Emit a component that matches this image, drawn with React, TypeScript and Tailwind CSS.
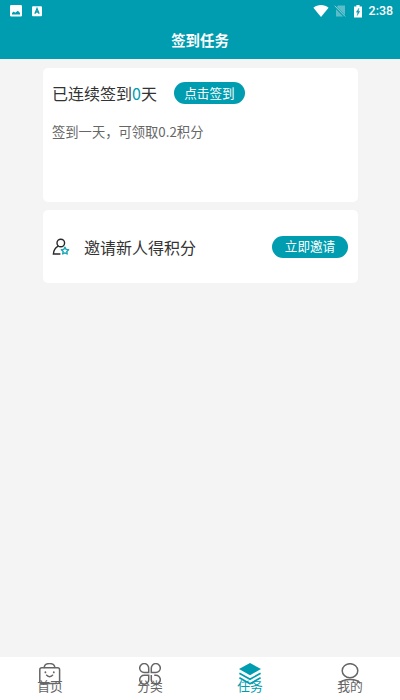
import type { ReactNode } from "react"

interface Tab {
    label: string
    icon: ReactNode
    active?: boolean
}

const tabs: Tab[] = [
    { label: "首页", icon: <BagIcon /> },
    { label: "分类", icon: <CategoryIcon /> },
    { label: "任务", icon: <LayersIcon />, active: true },
    { label: "我的", icon: <ProfileIcon /> },
]

function BagIcon() {
    return (
        <svg width="22" height="22" viewBox="0 0 22 22" fill="none" stroke="currentColor" strokeWidth="1.5" strokeLinecap="round">
            <rect x="0.8" y="4.8" width="19.8" height="15.6" rx="2" />
            <path d="M5.2 4.5C5.6 -0.7 15.4 -0.7 15.8 4.5" />
            <path d="M7.6 12.2c1.2 1.9 4.8 1.9 6 0" />
            <path d="M6.4 9.2v.2M14.8 9.2v.2" strokeWidth="1.8" />
        </svg>
    )
}

function CategoryIcon() {
    return (
        <svg width="22" height="22" viewBox="0 0 22 22" fill="none" stroke="currentColor" strokeWidth="1.5">
            <path d="M9.7 9.6H5.3A4.5 4.5 0 1 1 9.7 5.2z" />
            <path d="M12.3 9.6h4.4a4.5 4.5 0 1 0-4.4-4.4z" />
            <path d="M9.7 12.2H5.3a4.5 4.5 0 1 0 4.4 4.4z" />
            <path d="M12.3 12v4.6a4.5 4.5 0 1 0 4.4-4.4h-1.5" />
        </svg>
    )
}

function LayersIcon() {
    return (
        <svg width="22" height="22" viewBox="0 0 22 22" fill="none" stroke="currentColor" strokeWidth="1.7">
            <path d="M11 0 22 6 11 12.2 0 6z" fill="currentColor" stroke="none" />
            <path d="M.4 10.3 11 16.2l10.6-5.9M.4 14.8 11 20.7l10.6-5.9" />
        </svg>
    )
}

function ProfileIcon() {
    return (
        <svg width="22" height="22" viewBox="0 0 22 22" fill="none" stroke="currentColor" strokeWidth="1.5">
            <ellipse cx="11" cy="7.7" rx="7.8" ry="7" />
            <path d="M.8 20.5C2 17.8 6 16.4 11 16.4s9 1.4 10.2 4.1" />
        </svg>
    )
}

function InviteIcon() {
    return (
        <svg width="18" height="18" viewBox="0 0 18 18" fill="none" stroke="#292929" strokeWidth="1.4">
            <circle cx="8.8" cy="5" r="3.8" />
            <path d="M6.2 8.2C3.6 9.6 1.6 12.2 1.4 16h7" />
            <path
                d="m13 9.2 1.1 2.2 2.5.3-1.8 1.7.4 2.6-2.2-1.2-2.3 1.2.5-2.6-1.9-1.7 2.5-.3z"
                stroke="#1ba6b5"
                strokeLinejoin="round"
            />
        </svg>
    )
}

function StatusBar() {
    return (
        <div className="flex h-[22px] items-center pr-[7px] pl-[10px]">
            <svg width="12" height="12" viewBox="0 0 12 12">
                <rect width="12" height="11.5" rx="1.2" fill="#fff" />
                <path d="M2 9.5V8l1.8-1.6 1.4 1.3L7.9 5.8 10 8v1.5z" fill="#009caf" />
            </svg>
            <svg className="ml-[10px]" width="10" height="11" viewBox="0 0 10 11">
                <rect y=".2" width="10" height="10" rx="1" fill="#fff" />
                <path d="m2.9 7.8 2.1-5.3 2.1 5.3M3.8 6h2.4" fill="none" stroke="#009caf" strokeWidth="1.3" />
            </svg>

            <svg className="ml-auto" width="16" height="13" viewBox="0 0 16 13">
                <path d="M.4 2.7C4.6-.8 11.4-.8 15.6 2.7L8 12z" fill="#fff" />
            </svg>
            <svg className="ml-[5px]" width="12" height="13" viewBox="0 0 12 13">
                <path d="M4 .5h7v11H2V2.8z" fill="#5cbdc9" />
                <path d="m.4 1.1 10.8 10.8" stroke="#009caf" strokeWidth="2.2" />
                <path d="m.6.7 10.6 10.8" stroke="#8dd2da" />
            </svg>
            <svg className="ml-[8px]" width="8" height="13" viewBox="0 0 8 13">
                <path d="M2.4 0h3.2v1.4H8V12.5H0V1.4h2.4z" fill="#fff" />
                <path d="M4.9 3.2 2.3 7.2h1.5l-.6 3.4 2.6-4.3H4.3z" fill="#009caf" stroke="#009caf" strokeWidth=".4" />
            </svg>
            <span className="ml-[7px] font-['Roboto',sans-serif] text-[12.4px] leading-none font-medium">2:38</span>
        </div>
    )
}

export default function App() {
    return (
        <div className="flex h-[700px] w-[400px] flex-col overflow-hidden bg-[#f4f4f4] font-['Noto_Sans_CJK_SC',sans-serif]">
            <header className="h-[59px] shrink-0 bg-[#009caf] text-white">
                <StatusBar />
                <h1 className="text-center text-[14.4px] leading-[35px] font-bold">签到任务</h1>
            </header>

            <main className="flex flex-1 flex-col gap-2 pt-[9px] pr-[42px] pl-[43px]">
                {/* Daily check-in */}
                <section className="h-[134px] rounded-[5px] bg-white px-[9px] pt-[14px]">
                    <div className="flex items-start">
                        <p className="text-[16px] leading-[23px] text-[#333]">
                            已连续签到<span className="text-[#009caf]">0</span>天
                        </p>
                        <button className="ml-[17px] h-[22px] w-[71px] rounded-full bg-[#009caf] pb-px text-[12.6px] leading-[21px] text-white">
                            点击签到
                        </button>
                    </div>
                    <p className="mt-[17px] text-[13.3px] leading-5 text-[#666]">签到一天，可领取0.2积分</p>
                </section>

                {/* Invite */}
                <section className="flex h-[73px] items-center rounded-[5px] bg-white pr-[10px] pl-[9px]">
                    <InviteIcon />
                    <p className="ml-[14px] text-[16px] leading-6 text-[#333]">邀请新人得积分</p>
                    <button className="ml-auto h-[22px] w-[76px] rounded-full bg-[#009caf] pb-[2px] text-[12.6px] leading-[20px] text-white">
                        立即邀请
                    </button>
                </section>
            </main>

            <nav className="grid h-[43px] shrink-0 grid-cols-4 bg-white">
                {tabs.map((tab) => (
                    <div
                        key={tab.label}
                        className={`flex flex-col items-center pt-[6px] ${tab.active ? "text-[#009caf]" : "text-[#666]"}`}
                    >
                        {tab.icon}
                        <span className="-mt-[8px] text-[12.8px] leading-[18px]">{tab.label}</span>
                    </div>
                ))}
            </nav>
        </div>
    )
}
